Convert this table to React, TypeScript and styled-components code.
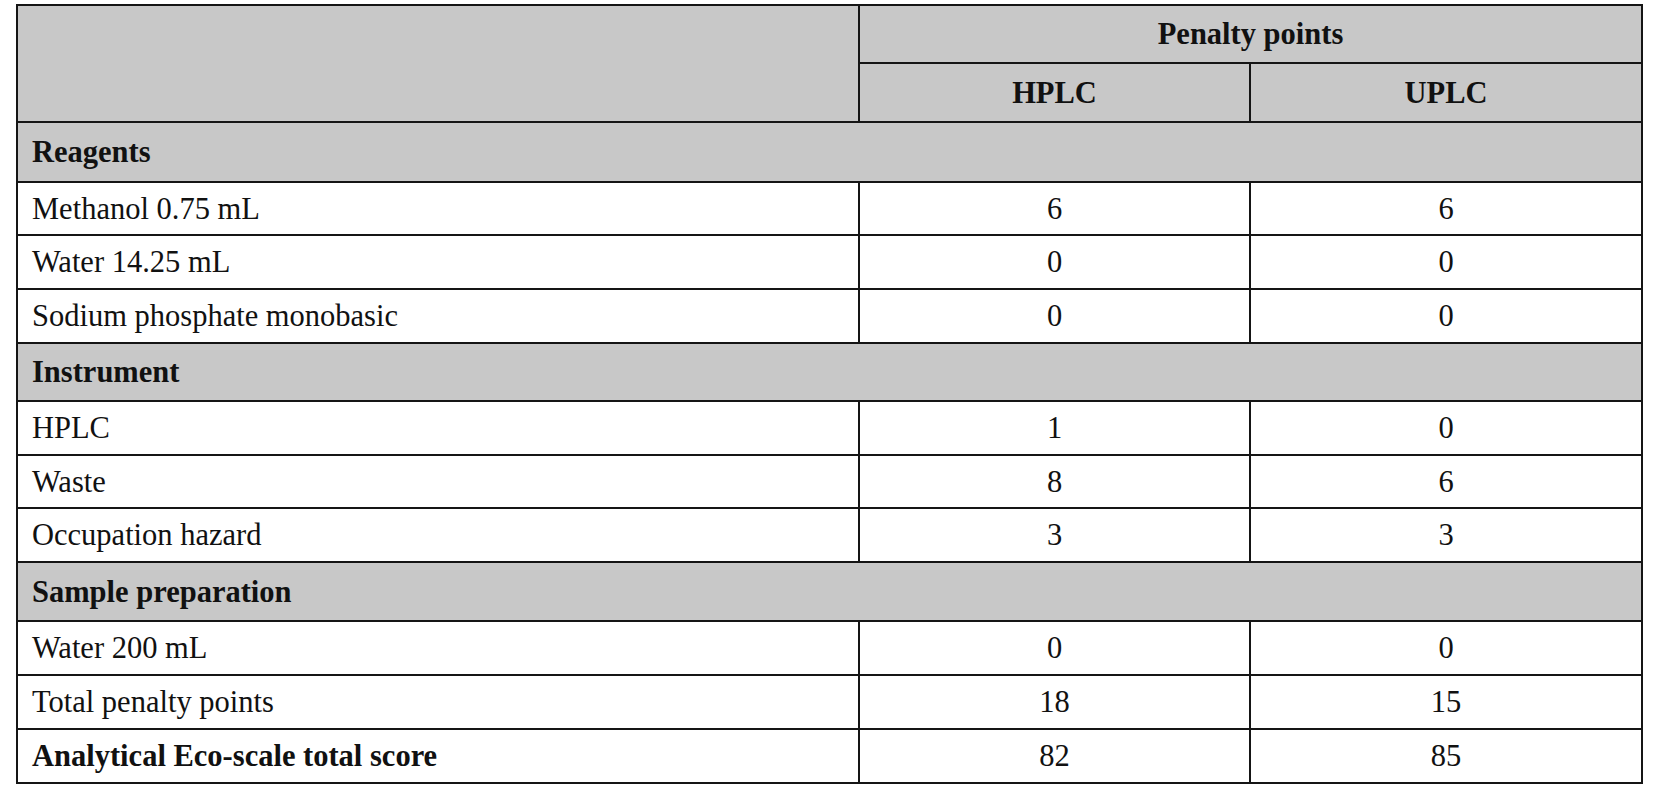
import React from 'react';
import styled, { createGlobalStyle } from 'styled-components';

const GlobalStyle = createGlobalStyle`
  html, body {
    margin: 0;
    padding: 0;
    background: #ffffff;
  }
  body {
    font-family: 'Liberation Serif', 'Times New Roman', serif;
    color: #111111;
  }
`;

const Page = styled.div`
  padding: 4px 0 0 16px;
  width: 1625px;
`;

const Table = styled.table`
  width: 1625px;
  border-collapse: collapse;
  table-layout: fixed;
  font-size: 30.5px;
  line-height: 1;
`;

const Row = styled.tr<{ $h: number }>`
  height: ${(p) => p.$h}px;
`;

const HeadCell = styled.th`
  background: #c8c8c8;
  border: 2px solid #151515;
  font-weight: 700;
  text-align: center;
  vertical-align: middle;
  padding: 1px 0 0;
`;

const GroupCell = styled.td`
  background: #c8c8c8;
  border: 2px solid #151515;
  font-weight: 700;
  text-align: left;
  vertical-align: middle;
  padding: 1px 0 0 14px;
`;

const LabelCell = styled.td<{ $bold?: boolean }>`
  border: 2px solid #151515;
  font-weight: ${(p) => (p.$bold ? 700 : 400)};
  text-align: left;
  vertical-align: middle;
  padding: 1px 0 0 14px;
`;

const ValueCell = styled.td`
  border: 2px solid #151515;
  text-align: center;
  vertical-align: middle;
  padding: 1px 0 0;
`;

type Item = { label: string; hplc: string; uplc: string; h: number; bold?: boolean };
type Group = { title: string; h: number; items: Item[] };

const groups: Group[] = [
  {
    title: 'Reagents',
    h: 60,
    items: [
      { label: 'Methanol 0.75 mL', hplc: '6', uplc: '6', h: 53 },
      { label: 'Water 14.25 mL', hplc: '0', uplc: '0', h: 54 },
      { label: 'Sodium phosphate monobasic', hplc: '0', uplc: '0', h: 54 },
    ],
  },
  {
    title: 'Instrument',
    h: 58,
    items: [
      { label: 'HPLC', hplc: '1', uplc: '0', h: 54 },
      { label: 'Waste', hplc: '8', uplc: '6', h: 53 },
      { label: 'Occupation hazard', hplc: '3', uplc: '3', h: 54 },
    ],
  },
  {
    title: 'Sample preparation',
    h: 59,
    items: [
      { label: 'Water 200 mL', hplc: '0', uplc: '0', h: 54 },
      { label: 'Total penalty points', hplc: '18', uplc: '15', h: 54 },
      { label: 'Analytical Eco-scale total score', hplc: '82', uplc: '85', h: 54, bold: true },
    ],
  },
];

const App: React.FC = () => (
  <>
    <GlobalStyle />
    <Page>
      <Table>
        <colgroup>
          <col style={{ width: 842 }} />
          <col style={{ width: 391 }} />
          <col style={{ width: 392 }} />
        </colgroup>
        <thead>
          <Row $h={58}>
            <HeadCell rowSpan={2} />
            <HeadCell colSpan={2}>Penalty points</HeadCell>
          </Row>
          <Row $h={59}>
            <HeadCell>HPLC</HeadCell>
            <HeadCell>UPLC</HeadCell>
          </Row>
        </thead>
        <tbody>
          {groups.map((g) => (
            <React.Fragment key={g.title}>
              <Row $h={g.h}>
                <GroupCell colSpan={3}>{g.title}</GroupCell>
              </Row>
              {g.items.map((it) => (
                <Row $h={it.h} key={it.label}>
                  <LabelCell $bold={it.bold}>{it.label}</LabelCell>
                  <ValueCell>{it.hplc}</ValueCell>
                  <ValueCell>{it.uplc}</ValueCell>
                </Row>
              ))}
            </React.Fragment>
          ))}
        </tbody>
      </Table>
    </Page>
  </>
);

export default App;
